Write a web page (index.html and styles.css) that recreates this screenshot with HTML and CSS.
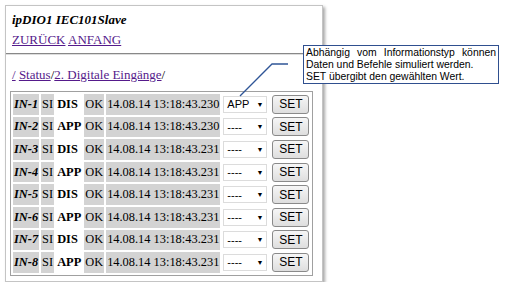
FILE: index.html
```html
<!DOCTYPE html>
<html lang="de">
<head>
    <meta charset="UTF-8">
    <title>ipDIO1 IEC101Slave - Digitale Eingänge</title>
    <link rel="stylesheet" href="styles.css">
</head>
<body>
    <div class="screen">
        <div class="page">
            <div class="title">ipDIO1 IEC101Slave</div>
            <div class="nav">
                <a href="#">ZURÜCK</a> <a href="#">ANFANG</a>
            </div>
            <hr class="rule">
            <div class="crumbs">
                <a href="#">/</a> <a href="#">Status</a>/<a href="#">2. Digitale Eingänge</a>/
            </div>

            <table class="inputs">
                <tr>
                    <td class="name">IN-1</td><td class="gray">SI</td><td class="state">DIS</td><td class="gray">OK</td><td class="gray">14.08.14 13:18:43.230</td>
                    <td class="sel"><span class="dropdown">APP<i>&#9660;</i></span></td>
                    <td class="btn"><button>SET</button></td>
                </tr>
                <tr>
                    <td class="name">IN-2</td><td class="gray">SI</td><td class="state">APP</td><td class="gray">OK</td><td class="gray">14.08.14 13:18:43.230</td>
                    <td class="sel"><span class="dropdown">----<i>&#9660;</i></span></td>
                    <td class="btn"><button>SET</button></td>
                </tr>
                <tr>
                    <td class="name">IN-3</td><td class="gray">SI</td><td class="state">DIS</td><td class="gray">OK</td><td class="gray">14.08.14 13:18:43.231</td>
                    <td class="sel"><span class="dropdown">----<i>&#9660;</i></span></td>
                    <td class="btn"><button>SET</button></td>
                </tr>
                <tr>
                    <td class="name">IN-4</td><td class="gray">SI</td><td class="state">APP</td><td class="gray">OK</td><td class="gray">14.08.14 13:18:43.231</td>
                    <td class="sel"><span class="dropdown">----<i>&#9660;</i></span></td>
                    <td class="btn"><button>SET</button></td>
                </tr>
                <tr>
                    <td class="name">IN-5</td><td class="gray">SI</td><td class="state">DIS</td><td class="gray">OK</td><td class="gray">14.08.14 13:18:43.231</td>
                    <td class="sel"><span class="dropdown">----<i>&#9660;</i></span></td>
                    <td class="btn"><button>SET</button></td>
                </tr>
                <tr>
                    <td class="name">IN-6</td><td class="gray">SI</td><td class="state">APP</td><td class="gray">OK</td><td class="gray">14.08.14 13:18:43.231</td>
                    <td class="sel"><span class="dropdown">----<i>&#9660;</i></span></td>
                    <td class="btn"><button>SET</button></td>
                </tr>
                <tr>
                    <td class="name">IN-7</td><td class="gray">SI</td><td class="state">DIS</td><td class="gray">OK</td><td class="gray">14.08.14 13:18:43.231</td>
                    <td class="sel"><span class="dropdown">----<i>&#9660;</i></span></td>
                    <td class="btn"><button>SET</button></td>
                </tr>
                <tr>
                    <td class="name">IN-8</td><td class="gray">SI</td><td class="state">APP</td><td class="gray">OK</td><td class="gray">14.08.14 13:18:43.231</td>
                    <td class="sel"><span class="dropdown">----<i>&#9660;</i></span></td>
                    <td class="btn"><button>SET</button></td>
                </tr>
            </table>
        </div>
    </div>

    <!-- Hinweis mit Linie -->
    <svg class="leader" width="507" height="288" viewBox="0 0 507 288">
        <polyline points="240,96 272,64 288,64" fill="none" stroke="#2f5597" stroke-width="1.3"/>
    </svg>
    <div class="callout">
        <p class="just">Abhängig vom Informationstyp können Daten und Befehle simuliert werden.</p>
        <p>SET übergibt den gewählten Wert.</p>
    </div>
</body>
</html>
```

FILE: styles.css
```css
* {
    box-sizing: border-box;
}

body {
    margin: 0;
    background: #fff;
    font-family: 'Liberation Serif', 'Times New Roman', serif;
    color: #000;
}

.screen {
    margin: 5px 0 0 5px;
    width: 318px;
    height: 277px;
    border: 1px solid #c4c4c4;
    box-shadow: 2px 2px 3px rgba(0,0,0,0.35);
    background: #fff;
}

.page {
    padding: 6px 0 0 0;
}

.title {
    font-size: 13px;
    font-weight: bold;
    font-style: italic;
    padding-left: 6px;
    line-height: 15px;
}

.nav {
    font-size: 13px;
    padding-left: 6px;
    margin-top: 5px;
    line-height: 16px;
}

a {
    color: #551a8b;
}

.rule {
    margin: 5px 0 0 0;
    border: 0;
    border-top: 1px solid #888;
    border-bottom: 1px solid #ddd;
}

.crumbs {
    font-size: 13px;
    padding-left: 6px;
    margin-top: 12px;
    line-height: 16px;
}

.inputs {
    margin: 8px 0 0 4px;
    border: 1px solid #a0a0a0;
    border-spacing: 2px;
    font-size: 12.4px;
}

.inputs td {
    height: 20.6px;
    padding: 0 1px;
    white-space: nowrap;
}

.inputs .name {
    background: #d3d3d3;
    font-weight: bold;
    font-style: italic;
}

.inputs .gray {
    background: #d3d3d3;
}

.inputs .state {
    font-weight: bold;
}

.inputs .sel {
    padding: 0 2px 0 1px;
}

.dropdown {
    display: flex;
    justify-content: space-between;
    align-items: center;
    width: 44px;
    height: 17px;
    border: 1px solid #dcdcdc;
    padding: 0 3px 0 3px;
    font-family: 'Liberation Sans', Arial, sans-serif;
    font-size: 11px;
    background: #fff;
}

.dropdown i {
    font-style: normal;
    font-size: 7px;
}

.btn button {
    display: block;
    width: 37px;
    height: 19px;
    padding: 0;
    border: 1px solid #8a8a8a;
    border-radius: 3px;
    background: linear-gradient(#f6f6f6, #dedede);
    font-family: 'Liberation Sans', Arial, sans-serif;
    font-size: 12px;
    color: #000;
}

.leader {
    position: absolute;
    left: 0;
    top: 0;
    pointer-events: none;
}

.callout {
    position: absolute;
    left: 303px;
    top: 45px;
    width: 196px;
    height: 39px;
    border: 1px solid #2f4f8f;
    background: #fff;
    padding: 1px 2px 0 2px;
    font-family: 'Liberation Sans', Arial, sans-serif;
    font-size: 10.4px;
    line-height: 12px;
}

.callout p {
    margin: 0;
}

.callout .just {
    text-align: justify;
}
```
